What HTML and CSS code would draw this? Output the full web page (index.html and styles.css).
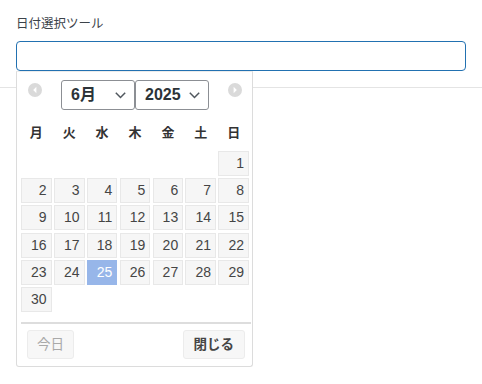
FILE: index.html
```html
<!DOCTYPE html>
<html>
<head>
    <meta charset="UTF-8">
    <title>日付選択ツール</title>
    <link rel="stylesheet" href="styles.css">
</head>
<body>
    <div class="field">
        <label class="label" for="date">日付選択ツール</label>
        <input class="input" id="date" type="text">
    </div>
    <div class="rule"></div>

    <div class="picker">
        <div class="head">
            <a href="javascript:;" class="nav">
                <svg width="14" height="14" viewBox="0 0 14 14"><circle cx="7" cy="7" r="7" fill="#dadada"/><path d="M8.4 3.8 L5.2 7 L8.4 10.2 Z" fill="#fff"/></svg>
            </a>
            <div class="selects">
                <div class="select">6月<svg class="chev" width="11" height="7" viewBox="0 0 11 7"><polyline points="0.8,0.8 5.5,5.5 10.2,0.8" fill="none" stroke="#50575e" stroke-width="1.5"/></svg></div>
                <div class="select">2025<svg class="chev" width="11" height="7" viewBox="0 0 11 7"><polyline points="0.8,0.8 5.5,5.5 10.2,0.8" fill="none" stroke="#50575e" stroke-width="1.5"/></svg></div>
            </div>
            <a href="javascript:;" class="nav">
                <svg width="14" height="14" viewBox="0 0 14 14"><circle cx="7" cy="7" r="7" fill="#dadada"/><path d="M5.6 3.8 L8.8 7 L5.6 10.2 Z" fill="#fff"/></svg>
            </a>
        </div>
        <div class="week">
            <span>月</span><span>火</span><span>水</span><span>木</span><span>金</span><span>土</span><span>日</span>
        </div>
        <div class="days" id="days"></div>
        <div class="foot">
            <a href="javascript:;" class="btn off">今日</a>
            <a href="javascript:;" class="btn close">閉じる</a>
        </div>
    </div>

    <script>
        var oDays = document.getElementById('days');
        var html = '';
        for (var i = 0; i < 6; i++) {
            html += '<span class="empty"></span>';
        }
        for (var d = 1; d <= 30; d++) {
            html += '<a href="javascript:;" class="day' + (d == 25 ? ' active' : '') + '">' + d + '</a>';
        }
        oDays.innerHTML = html;
    </script>
</body>
</html>
```

FILE: styles.css
```css
* {
    margin: 0;
    padding: 0;
    box-sizing: border-box;
}
body {
    font-family: "Liberation Sans", "Noto Sans CJK JP", sans-serif;
    background: #fff;
    color: #454545;
}
a {
    text-decoration: none;
    color: inherit;
}
.field {
    padding: 16px 16px 0;
}
.label {
    display: block;
    font-size: 12.5px;
    line-height: 16px;
    color: #3c434a;
    margin-bottom: 9px;
}
.input {
    display: block;
    width: 450px;
    height: 30px;
    border: 1px solid #2271b1;
    border-radius: 4px;
    outline: none;
    font-size: 14px;
}
.rule {
    margin-top: 16px;
    border-top: 1px solid #e4e4e4;
}
.picker {
    position: absolute;
    left: 16px;
    top: 71px;
    width: 237px;
    height: 296px;
    background: #fff;
    border: 1px solid #dcdcdc;
    border-top-color: #ececec;
    border-radius: 0 0 3px 3px;
    padding: 8px 3px 0 4px;
}
.head {
    display: flex;
    align-items: flex-start;
    justify-content: space-between;
    padding: 0 7px;
}
.nav {
    display: flex;
    width: 14px;
    height: 14px;
    margin-top: 3px;
}
.selects {
    display: flex;
}
.select {
    position: relative;
    width: 74px;
    height: 30px;
    border: 1px solid #8c8f94;
    border-radius: 3px;
    padding-left: 9px;
    font-size: 16px;
    font-weight: bold;
    line-height: 28px;
    color: #2c3338;
}
.chev {
    position: absolute;
    right: 8px;
    top: 11px;
}
.week {
    display: grid;
    grid-template-columns: repeat(7, 1fr);
    column-gap: 2.3px;
    width: 228px;
    margin-top: 5px;
    height: 32px;
    align-items: center;
    font-size: 13px;
    font-weight: bold;
    color: #333;
    text-align: center;
}
.days {
    display: grid;
    grid-template-columns: repeat(7, 1fr);
    column-gap: 2.3px;
    row-gap: 2.2px;
    width: 228px;
    margin-top: 4px;
}
.day {
    height: 25px;
    background: #f6f6f6;
    border: 1px solid #e8e8e8;
    text-align: right;
    padding-right: 4px;
    font-size: 14px;
    line-height: 23px;
    color: #454545;
}
.day.active {
    background: #97b6e9;
    border-color: #97b6e9;
    color: #fff;
}
.foot {
    display: flex;
    justify-content: space-between;
    margin-top: 10px;
    border-top: 2px solid #dddddd;
    padding: 6px 6px 0 6px;
    width: 230px;
}
.btn {
    height: 29px;
    padding: 0 9px;
    background: #f7f7f7;
    border: 1px solid #ececec;
    border-radius: 3px;
    font-size: 13.5px;
    line-height: 27px;
}
.btn.off {
    color: #a9a9a9;
}
.btn.close {
    font-weight: bold;
    color: #454545;
    padding: 0 10px;
}
```
